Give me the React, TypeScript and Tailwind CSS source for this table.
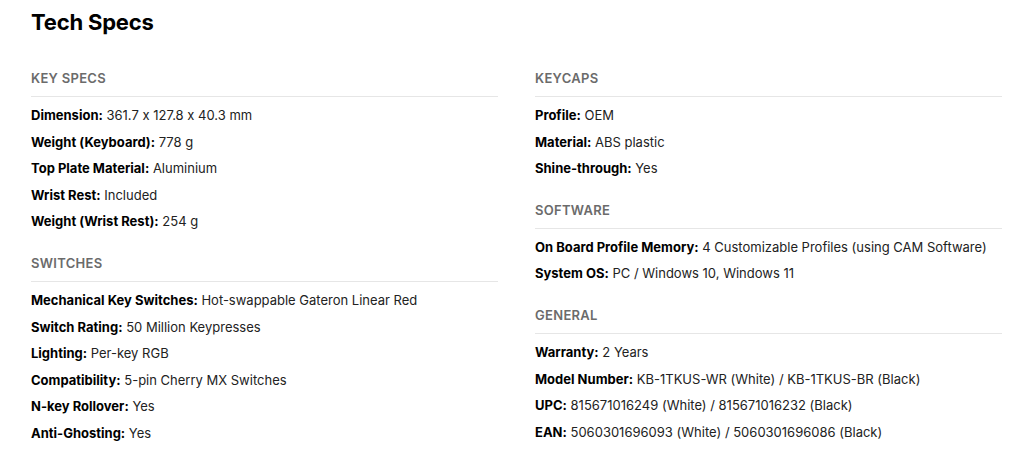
import React from "react";

type Row = [string, string];
type Section = { title: string; rows: Row[] };

const left: Section[] = [
  {
    title: "KEY SPECS",
    rows: [
      ["Dimension:", "361.7 x 127.8 x 40.3 mm"],
      ["Weight (Keyboard):", "778 g"],
      ["Top Plate Material:", "Aluminium"],
      ["Wrist Rest:", "Included"],
      ["Weight (Wrist Rest):", "254 g"],
    ],
  },
  {
    title: "SWITCHES",
    rows: [
      ["Mechanical Key Switches:", "Hot-swappable Gateron Linear Red"],
      ["Switch Rating:", "50 Million Keypresses"],
      ["Lighting:", "Per-key RGB"],
      ["Compatibility:", "5-pin Cherry MX Switches"],
      ["N-key Rollover:", "Yes"],
      ["Anti-Ghosting:", "Yes"],
    ],
  },
];

const right: Section[] = [
  {
    title: "KEYCAPS",
    rows: [
      ["Profile:", "OEM"],
      ["Material:", "ABS plastic"],
      ["Shine-through:", "Yes"],
    ],
  },
  {
    title: "SOFTWARE",
    rows: [
      ["On Board Profile Memory:", "4 Customizable Profiles (using CAM Software)"],
      ["System OS:", "PC / Windows 10, Windows 11"],
    ],
  },
  {
    title: "GENERAL",
    rows: [
      ["Warranty:", "2 Years"],
      ["Model Number:", "KB-1TKUS-WR (White) / KB-1TKUS-BR (Black)"],
      ["UPC:", "815671016249 (White) / 815671016232 (Black)"],
      ["EAN:", "5060301696093 (White) / 5060301696086 (Black)"],
    ],
  },
];

function SectionBlock({ s }: { s: Section }) {
  return (
    <div className="mb-[18px]">
      <div className="border-b border-[#e6e6e6] pb-[8px]">
        <h3 className="text-[13px] leading-[20px] font-semibold tracking-[0.3px] text-[#6b6b6b]">
          {s.title}
        </h3>
      </div>
      <div className="pt-[5px]">
        {s.rows.map(([k, v]) => (
          <p key={k} className="text-[13px] leading-[26.6px] text-[#222]">
            <span className="font-bold text-[#000]">{k}</span> {v}
          </p>
        ))}
      </div>
    </div>
  );
}

export default function App() {
  return (
    <div
      className="w-[1024px] h-[473px] bg-white pl-[31px] pr-[22px] overflow-hidden [font-feature-settings:'calt'_0]"
      style={{ fontFamily: "Inter, 'Noto Sans', sans-serif" }}
    >
      <h2 className="text-[22px] leading-[44px] font-bold text-black tracking-[-0.2px]">Tech Specs</h2>
      <div className="grid grid-cols-2 gap-x-[37px] mt-[24px]">
        <div>
          {left.map((s) => (
            <SectionBlock key={s.title} s={s} />
          ))}
        </div>
        <div>
          {right.map((s) => (
            <SectionBlock key={s.title} s={s} />
          ))}
        </div>
      </div>
    </div>
  );
}
